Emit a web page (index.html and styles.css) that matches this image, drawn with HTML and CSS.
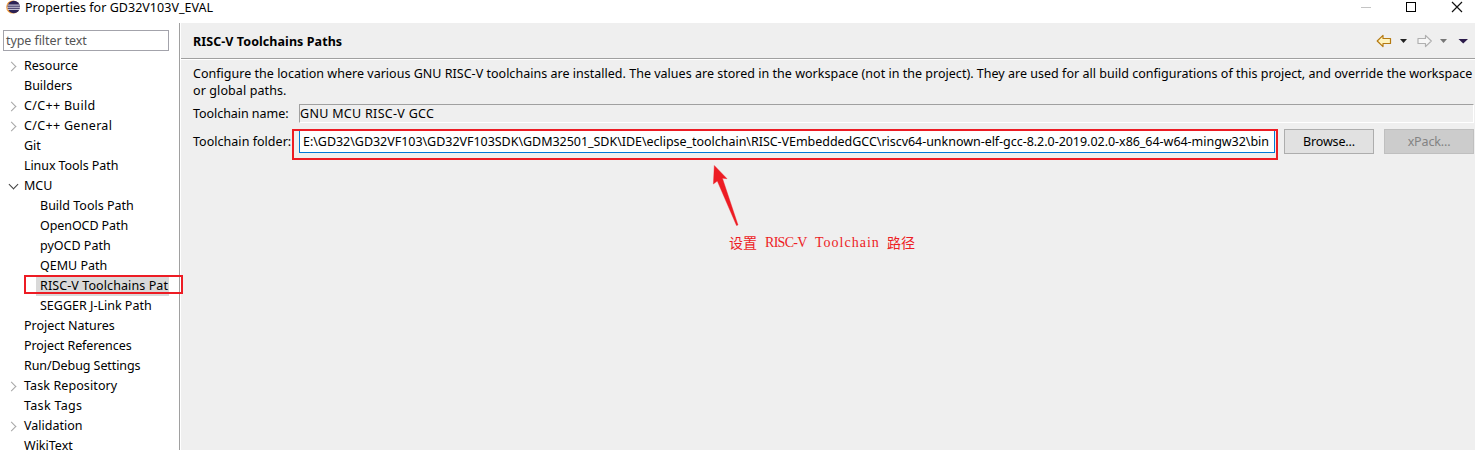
FILE: index.html
```html
<!DOCTYPE html>
<html lang="en">
<head>
<meta charset="utf-8">
<title>Properties for GD32V103V_EVAL</title>
<link rel="stylesheet" href="styles.css">
</head>
<body>
<header class="titlebar">
  <svg class="logo" width="15" height="14" viewBox="0 0 15 14"><circle cx="6.8" cy="7" r="6.6" fill="#f29b38"/><circle cx="7.800" cy="7" r="6.2" fill="#2c2255"/><path d="M1.6 5.1H13.8M1.2 7.2H14M1.6 9.3H13.8" stroke="#e8e6f2" stroke-width="1"/></svg>
  <h1 class="title"><span>Properties for GD32V103V_EVAL</span></h1>
  <div class="window-controls">
    <svg width="110" height="14" viewBox="0 0 110 14" fill="none" shape-rendering="crispEdges"><path d="M0 7.5H10" stroke="#c4c4c4"/><rect x="45.5" y="2.5" width="9" height="9" stroke="#000"/><path d="M91 2L101 12M101 2L91 12" stroke="#111" stroke-width="1.2" shape-rendering="auto"/></svg>
  </div>
</header>
<div class="dialog">
  <nav class="sidebar">
    <div class="filter">type filter text</div>
    <ul class="tree">
      <li class="shut"><span>Resource</span></li>
      <li><span>Builders</span></li>
      <li class="shut looser"><span>C/C++ Build</span></li>
      <li class="shut looser"><span>C/C++ General</span></li>
      <li><span>Git</span></li>
      <li class="tight"><span>Linux Tools Path</span></li>
      <li class="open"><span>MCU</span></li>
      <li class="child"><span>Build Tools Path</span></li>
      <li class="child tight"><span>OpenOCD Path</span></li>
      <li class="child"><span>pyOCD Path</span></li>
      <li class="child"><span>QEMU Path</span></li>
      <li class="child selected loose"><span>RISC-V Toolchains Pat</span></li>
      <li class="child"><span>SEGGER J-Link Path</span></li>
      <li><span>Project Natures</span></li>
      <li class="tight"><span>Project References</span></li>
      <li class="tight"><span>Run/Debug Settings</span></li>
      <li class="shut loose"><span>Task Repository</span></li>
      <li class="looser"><span>Task Tags</span></li>
      <li class="shut"><span>Validation</span></li>
      <li><span>WikiText</span></li>
    </ul>
  </nav>
  <main class="page">
    <div class="page-header">
      <h2><span>RISC-V Toolchains Paths</span></h2>
      <svg class="nav-icons" width="94" height="14" viewBox="0 0 94 14"><path d="M1.2 7L7 1.4V4.5H14.5V9.5H7V12.6Z" fill="#fff3bd" stroke="#b57a12" stroke-width="1.2" stroke-linejoin="round"/><path d="M24 5H31L27.500 9Z" fill="#222"/><path d="M55.300 7L49.500 1.4V4.5H42V9.5H49.500V12.6Z" fill="#f7f7f7" stroke="#b0b0b0" stroke-width="1.2" stroke-linejoin="round"/><path d="M64 5H71L67.500 9Z" fill="#777"/><path d="M82.500 5H92L87.200 9.600Z" fill="#2b1a4a"/></svg>
    </div>
    <p class="description"><span>Configure the location where various GNU RISC-V toolchains are installed. The values are stored in the workspace (not in the project). They are used for all build configurations of this project, and override the workspace</span><br><span class="loose">or global paths.</span></p>
    <div class="row name-row">
      <label><span>Toolchain name:</span></label>
      <div class="name-field"><span>GNU MCU RISC-V GCC</span></div>
    </div>
    <div class="row folder-row">
      <label><span>Toolchain folder:</span></label>
      <div class="folder-field"><span class="path">E:\GD32\GD32VF103\GD32VF103SDK\GDM32501_SDK\IDE\eclipse_toolchain\RISC-VEmbeddedGCC\riscv64-unknown-elf-gcc-8.2.0-2019.02.0-x86_64-w64-mingw32\bin</span></div>
      <button class="browse">Browse...</button>
      <button class="xpack" disabled>xPack...</button>
    </div>
    <svg class="arrow" width="28" height="64" viewBox="0 0 28 64"><path d="M2.300 1.500L15 14.700L10.400 14.200L26 61L24.500 61.500L5.300 17L1.400 20Z" fill="#ed1c24" stroke="#ed1c24" stroke-width=".4"/></svg>
    <div class="note"><span class="cn">设置</span><span class="risc">RISC-V</span><span class="tool">Toolchain</span><span class="cn">路径</span></div>
  </main>
</div>
</body>
</html>
```
FILE: styles.css
```css
*, *::before, *::after { box-sizing: border-box; }
body { margin: 0; width: 1475px; height: 450px; overflow: hidden; background: #fff; color: #000; font: 12.5px/20px "Noto Sans", "Open Sans", sans-serif; }
h1, h2, p, ul { margin: 0; padding: 0; font-size: inherit; font-weight: 400; }
span { white-space: pre; }
.tight { letter-spacing: -.08px; }
.loose { letter-spacing: .1px; }
.looser { letter-spacing: .32px; }
.titlebar { display: flex; height: 23px; padding: 0 4px 0 6px; align-items: flex-start; }
.logo { margin-right: 4px; }
.title { line-height: 15px; letter-spacing: .03px; }
.window-controls { margin-left: auto; height: 14px; line-height: 0; }
.dialog { display: flex; height: 427px; }
.sidebar { width: 180px; border-right: 1px solid #a0a0a0; padding: 7px 0 0 3px; flex: none; }
.filter { width: 166px; height: 21px; border: 1px solid #a3a3ab; padding-left: 2px; line-height: 20px; color: #555; letter-spacing: -.08px; }
.tree { list-style: none; margin: 5px 0 0 -3px; }
.tree li { position: relative; height: 20px; padding-left: 24px; line-height: 20px; }
.tree .child { padding-left: 40px; }
.tree .shut::before, .tree .open::before { content: ""; position: absolute; width: 7px; height: 7px; border: solid #a6a6a6; border-width: 1.8px 1.8px 0 0; transform: rotate(45deg); left: 8px; top: 7px; }
.tree .open::before { border-color: #404040; transform: rotate(135deg); top: 5px; left: 10px; }
.tree .selected { margin-left: 36px; padding-left: 4px; width: 133px; background: #d9d9d9; }
.selected::after { content: ""; position: absolute; left: -12px; top: -1px; width: 159px; height: 19px; border: 2px solid #ed1c24; z-index: 2; }
.page { flex: 1; min-width: 0; margin-left: 1px; background: #efefef; position: relative; }
.page-header { height: 37px; display: flex; justify-content: space-between; padding: 9px 5px 0 12px; border-bottom: 1px solid #fff; box-shadow: inset 0 -1px #a0a0a0; }
h2 { font-weight: 700; letter-spacing: .07px; }
.nav-icons { margin-top: 2px; }
.description { margin: 5px 0 0 12px; line-height: 17px; height: 39px; letter-spacing: .018px; }
.row { display: flex; }
.row label { width: 106px; padding-left: 12px; flex: none; white-space: nowrap; }
.name-row { height: 25px; }
.name-field { margin-left: 12px; width: 1175px; height: 19px; border: 1px solid #a0a0a0; border-color: #a0a0a0 #fff #fff #a0a0a0; line-height: 17px; letter-spacing: .3px; }
.name-row label { line-height: 19px; letter-spacing: -.05px; }
.folder-row { height: 31px; align-items: flex-start; }
.folder-row label { width: 111px; line-height: 26px; letter-spacing: .03px; }
.folder-field { width: 986px; height: 31px; border: 2px solid #ed1c24; padding: 0 1px 5px 5px; line-height: 22px; }
.path { display: block; height: 22px; background: #fff; border: 1px solid #0078d7; border-top: 0; padding-left: 3px; letter-spacing: -.035px; }
button { width: 90px; height: 25px; padding: 0; border: 1px solid #adadad; background: #e1e1e1; font: inherit; line-height: 23px; margin-left: 6px; letter-spacing: -.15px; color: #000; }
.xpack { margin-left: 10px; background: #ccc; border-color: #bfbfbf; color: #838383; }
.arrow { position: absolute; left: 531px; top: 141px; }
.note { position: absolute; left: 548px; top: 209px; display: flex; color: #ed1c24; font: 14px/20px "Noto Sans CJK SC", sans-serif; }
.note .risc, .note .tool { font: 14px/21px "Liberation Serif", serif; }
.risc { width: 43px; margin-left: 8px; letter-spacing: -.7px; }
.tool { width: 65px; margin: 0 7px; letter-spacing: 1px; }
```
